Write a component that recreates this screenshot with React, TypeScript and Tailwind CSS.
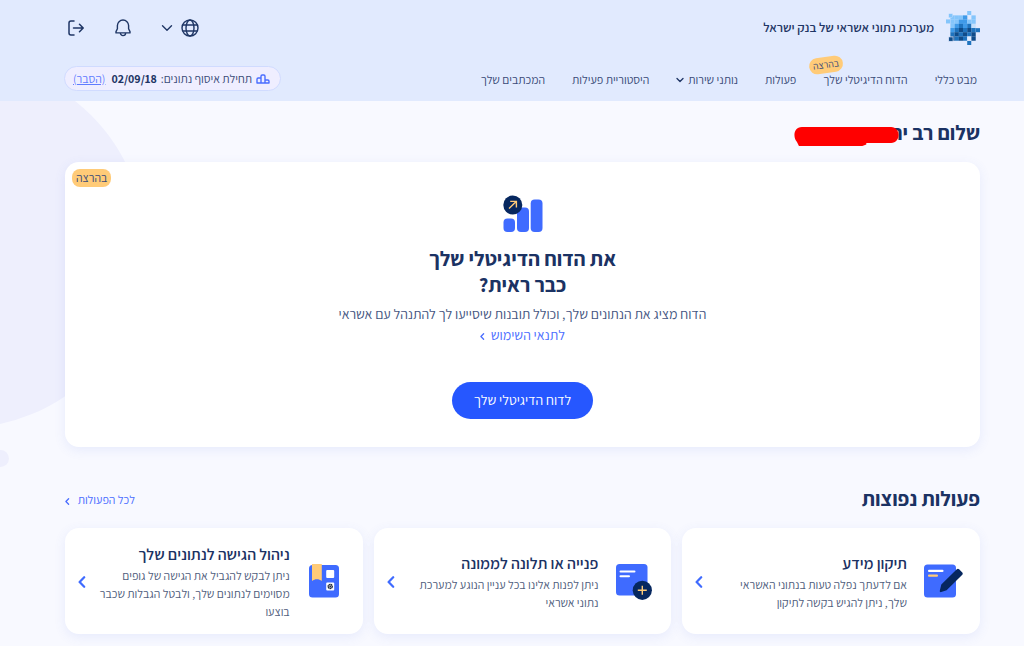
import type { ReactNode } from 'react';

type IconProps = { className?: string };

function LogoMark() {
  const dark = '#0f4c8a';
  const mid = '#1e73be';
  const blue = '#3f9ae8';
  const light = '#84c5fb';
  const grid = [
    [light, light, light, blue, '', light],
    [light, light, blue, blue, light, light],
    [light, blue, mid, blue, mid, '#c3dffb'],
    [blue, mid, dark, mid, dark, mid],
    [mid, dark, mid, dark, mid, dark],
    [dark, mid, dark, mid, '#dcebff', dark],
  ];
  return (
    <svg width="34" height="34" viewBox="18 18 101 101" aria-hidden="true">
      {grid.map((row, r) =>
        row.map((c, i) =>
          c ? <rect key={`${r}-${i}`} x={31 + i * 12.5} y={31 + r * 12.5} width="12.8" height="12.8" fill={c} /> : null,
        ),
      )}
      <rect x="81" y="18" width="12" height="12" fill={light} />
      <rect x="26" y="26" width="12" height="12" fill={light} stroke="#e1eafe" strokeWidth="1" />
      <rect x="18" y="43" width="12" height="12" fill={light} />
      <rect x="107" y="69" width="12" height="12" fill={mid} />
      <rect x="26" y="95" width="13" height="13" fill={dark} stroke="#e1eafe" strokeWidth="2" />
      <rect x="81" y="107" width="12" height="12" fill={mid} />
    </svg>
  );
}

function Chevron({ className = '' }: IconProps) {
  return (
    <svg className={className} viewBox="0 0 12 12" fill="none" stroke="currentColor" strokeLinecap="round" strokeLinejoin="round" aria-hidden="true">
      <path d="M1.5 3.8 6 8.3l4.5-4.5" />
    </svg>
  );
}

function ChevronLeft({ className = '' }: IconProps) {
  return (
    <svg className={className} viewBox="0 0 8 12" fill="none" stroke="currentColor" strokeWidth="2.2" strokeLinecap="round" strokeLinejoin="round" aria-hidden="true">
      <path d="M6.2 1.2 1.6 6l4.6 4.8" />
    </svg>
  );
}

function GlobeIcon() {
  return (
    <svg width="18" height="18" viewBox="0 0 18 18" fill="none" stroke="currentColor" strokeWidth="1.4" aria-hidden="true">
      <circle cx="9" cy="9" r="8" />
      <ellipse cx="9" cy="9" rx="4" ry="8" />
      <path d="M1.8 6h14.400M1.800 12h14.400" strokeWidth="1.300" />
    </svg>
  );
}

function BellIcon() {
  return (
    <svg width="16" height="18" viewBox="0 0 16 18" fill="none" stroke="currentColor" strokeWidth="1.4" strokeLinejoin="round" aria-hidden="true">
      <path d="M8 1a5.6 5.6 0 0 0-5.6 5.6v3.2L1 12.600v1.300h14v-1.300l-1.400-2.800V6.600A5.600 5.600 0 0 0 8 1Z" />
      <path d="M5.400 14a2.600 2.600 0 0 0 5.200 0" />
    </svg>
  );
}

function LogoutIcon() {
  return (
    <svg width="16" height="16" viewBox="0 0 16 16" fill="none" stroke="currentColor" strokeWidth="1.500" strokeLinecap="round" strokeLinejoin="round" aria-hidden="true">
      <path d="M6 1H3a2 2 0 0 0-2 2v10a2 2 0 0 0 2 2h3M5.500 8H15M11.500 4.300 15.200 8l-3.700 3.700" />
    </svg>
  );
}

function PodiumIcon() {
  return (
    <svg width="14" height="10" viewBox="0 0 14 10" fill="none" stroke="#4a6dff" strokeWidth="1.400" strokeLinejoin="round" aria-hidden="true">
      <path d="M5 9V2.200C5 1.400 5.400 1 6.200 1h1.600C8.600 1 9 1.400 9 2.200V9M5 4H2.200C1.400 4 1 4.400 1 5.200V9h12V7.200C13 6.400 12.600 6 11.800 6H9" />
    </svg>
  );
}

function ReportIcon() {
  return (
    <svg width="40" height="38" viewBox="0 0 40 38" aria-hidden="true">
      <rect x="0.500" y="23.500" width="11.500" height="13.500" rx="4" fill="#3f6bff" />
      <rect x="14" y="12.500" width="12" height="24.500" rx="4" fill="#3f6bff" />
      <rect x="27.700" y="4.500" width="11.800" height="32.500" rx="4" fill="#3f6bff" />
      <circle cx="9.800" cy="10" r="9.500" fill="#06275f" />
      <path d="M6 13.600 13.200 6.600M7.200 6.400h6.200v6.200" fill="none" stroke="#ffcb78" strokeWidth="1.400" />
    </svg>
  );
}

function EditIcon() {
  return (
    <svg width="40" height="40" viewBox="0 0 40 40" aria-hidden="true">
      <rect x="1" y="3.500" width="32" height="33" rx="3.500" fill="#3f6bff" />
      <rect x="5" y="8.800" width="15.500" height="2.200" rx="1" fill="#fff" />
      <rect x="5" y="13.500" width="10" height="2.200" rx="1" fill="#ffcb78" />
      <path d="M33.800 8.200c.7-.7 1.600-.7 2.300 0l3.200 3.300c.6.7.6 1.500 0 2.200L23.600 29.200l-5.400 1.900c-1 .3-1.600-.4-1.400-1.300l1.500-6.200Z" fill="#06275f" />
    </svg>
  );
}

function RequestIcon() {
  return (
    <svg width="38" height="38" viewBox="0 0 38 38" aria-hidden="true">
      <rect x="1" y="2" width="31.500" height="31.500" rx="3.500" fill="#3f6bff" />
      <rect x="4.500" y="8.500" width="16" height="2" rx="1" fill="#fff" />
      <rect x="4.500" y="13.200" width="10.500" height="2" rx="1" fill="#fff" />
      <circle cx="27.300" cy="28.300" r="9.600" fill="#06275f" />
      <path d="M27.300 23.800v9M22.800 28.300h9" stroke="#ffcb78" strokeWidth="1.400" />
    </svg>
  );
}

function AccessIcon() {
  return (
    <svg className="mr-1" width="30" height="34" viewBox="0 0 30 34" aria-hidden="true">
      <rect x="0" y="1" width="30" height="32.500" rx="3.500" fill="#3f6bff" />
      <path d="M3 0h9.800v17C9.800 14.600 6 14.600 3 17Z" fill="#ffcb78" />
      <rect x="17.200" y="6" width="8" height="8" rx="1" fill="#fff" />
      <rect x="17.200" y="18.500" width="8" height="8" rx="1" fill="#fff" />
      <circle cx="21.200" cy="22.500" r="2" fill="none" stroke="#232b3d" strokeWidth="1.500" strokeDasharray="1.500 .3" />
      <circle cx="21.200" cy="22.500" r="0.900" fill="#232b3d" />
    </svg>
  );
}

const navItems: { label: string; badge?: string; menu?: boolean }[] = [
  { label: 'מבט כללי' },
  { label: 'הדוח הדיגיטלי שלך', badge: 'בהרצה' },
  { label: 'פעולות' },
  { label: 'נותני שירות', menu: true },
  { label: 'היסטוריית פעילות' },
  { label: 'המכתבים שלך' },
];

const actions: { title: string; text: string; icon: ReactNode }[] = [
  { title: 'תיקון מידע', text: 'אם לדעתך נפלה טעות בנתוני האשראי\nשלך, ניתן להגיש בקשה לתיקון', icon: <EditIcon /> },
  { title: 'פנייה או תלונה לממונה', text: 'ניתן לפנות אלינו בכל עניין הנוגע למערכת\nנתוני אשראי', icon: <RequestIcon /> },
  { title: 'ניהול הגישה לנתונים שלך', text: 'ניתן לבקש להגביל את הגישה של גופים\nמסוימים לנתונים שלך, ולבטל הגבלות שכבר\nבוצעו', icon: <AccessIcon /> },
];

function Header() {
  return (
    <header className="relative bg-[#e1eafe] pr-11 pl-16 text-[#1f3665]">
      <div className="flex h-14 items-center justify-between">
        <a href="#home" className="flex items-center gap-3 text-[13px] font-semibold">
          <LogoMark />
          מערכת נתוני אשראי של בנק ישראל
        </a>
        <div className="flex items-center pl-1">
          <button type="button" aria-label="בחירת שפה" className="flex items-center gap-2">
            <GlobeIcon />
            <Chevron className="w-3 stroke-[1.4]" />
          </button>
          <button type="button" aria-label="התראות" className="mr-[30px]">
            <BellIcon />
          </button>
          <button type="button" aria-label="יציאה" className="mr-[31px]">
            <LogoutIcon />
          </button>
        </div>
      </div>
      <div className="flex h-[45px] items-center justify-between">
        <nav className="flex items-center gap-[27px] pt-0.5 pr-[3px] text-[12px] text-[#3a4b78]">
          {navItems.map((item) => (
            <a key={item.label} href="#nav" className="relative flex items-center gap-1">
              {item.label}
              {item.menu && <Chevron className="w-2 stroke-2 text-[#1f3665]" />}
              {item.badge && (
                <span className="absolute -top-3.5 left-[-14px] -rotate-8 rounded-lg bg-[#ffcb78] px-1 text-[10px] leading-4">
                  {item.badge}
                </span>
              )}
            </a>
          ))}
        </nav>
        <div className="flex h-[25px] items-center gap-1 rounded-full border border-[#d0dbff] bg-[#efeeff] pr-2.5 pl-2 text-[12px]">
          <PodiumIcon />
          <span className="text-[#3a4b78]">תחילת איסוף נתונים:</span>
          <b className="font-bold">02/09/18</b>
          <a href="#explain" className="mr-0.5 text-[#5f7cff] underline">(הסבר)</a>
        </div>
      </div>
    </header>
  );
}

export default function App() {
  return (
    <div dir="rtl" className="relative min-h-screen overflow-hidden bg-[#f8f9ff] font-['Assistant','Open_Sans',sans-serif] text-[#1b3263]">
      <div className="absolute top-[62px] -left-[221px] size-[366px] rounded-full bg-[#eeeffd]" />
      <div className="absolute top-[450px] -left-2 size-[17px] rounded-full bg-[#eeeffd]" />
      <Header />
      <main className="relative pr-11 pl-[65px]">
        <h1 className="relative pt-[18px] text-[21px] leading-7 font-bold">
          שלום רב ית
          <svg className="absolute top-[26px] right-[81px]" width="105" height="20" viewBox="0 0 106 20" aria-hidden="true">
            <path d="M8 0h90c10 0 10 16 0 16H73v1.500L69 19H5L3 15C-1 11-1 0 8 0Z" fill="#ff0000" />
          </svg>
        </h1>

        <section className="relative mt-[15px] flex flex-col items-center rounded-[14px] bg-white pt-[33px] pb-7 shadow-[0_3px_12px_rgba(80,110,230,0.1)]">
          <span className="absolute top-[7px] left-[7px] rounded-lg bg-[#ffcb78] px-1 text-[12px] leading-[18px] text-[#3a4b78]">בהרצה</span>
          <ReportIcon />
          <h2 className="mt-[13px] text-center text-[21px] leading-[26px] font-bold">
            את הדוח הדיגיטלי שלך
            <br />
            כבר ראית?
          </h2>
          <p className="mt-1.5 text-[14px] leading-[21px] text-[#44557f]">הדוח מציג את הנתונים שלך, וכולל תובנות שיסייעו לך להתנהל עם אשראי</p>
          <a href="#terms" className="flex items-center gap-1.5 text-[14px] leading-[21px] text-[#4a6dff]">
            לתנאי השימוש
            <ChevronLeft className="mt-0.5 h-[7px]" />
          </a>
          <button type="button" className="mt-9 h-[37px] rounded-full bg-[#2657ff] px-[22px] text-[14px] text-white">
            לדוח הדיגיטלי שלך
          </button>
        </section>

        <div className="mt-[38px] flex items-center justify-between">
          <h2 className="text-[21px] leading-7 font-bold">פעולות נפוצות</h2>
          <a href="#all" className="flex items-center gap-2 pt-0.5 text-[12px] text-[#4a6dff]">
            לכל הפעולות
            <ChevronLeft className="mt-0.5 h-[7px]" />
          </a>
        </div>

        <div className="mt-[15px] grid grid-cols-3 gap-[11px] pb-3">
          {actions.map((a) => (
            <a key={a.title} href="#action" className="flex min-h-[106px] items-center rounded-[14px] bg-white pt-0.5 pr-[17px] pl-[13px] shadow-[0_3px_12px_rgba(80,110,230,0.1)]">
              <span className="flex w-10 shrink-0 justify-center pb-0.5">{a.icon}</span>
              <span className="mr-4 flex-1">
                <strong className="block text-[16px] leading-6 font-semibold">{a.title}</strong>
                <span className="block text-[12px] leading-[18px] whitespace-pre-line text-[#4f5d7c]">{a.text}</span>
              </span>
              <ChevronLeft className="h-3 shrink-0 text-[#3f6bff]" />
            </a>
          ))}
        </div>
      </main>
    </div>
  );
}
